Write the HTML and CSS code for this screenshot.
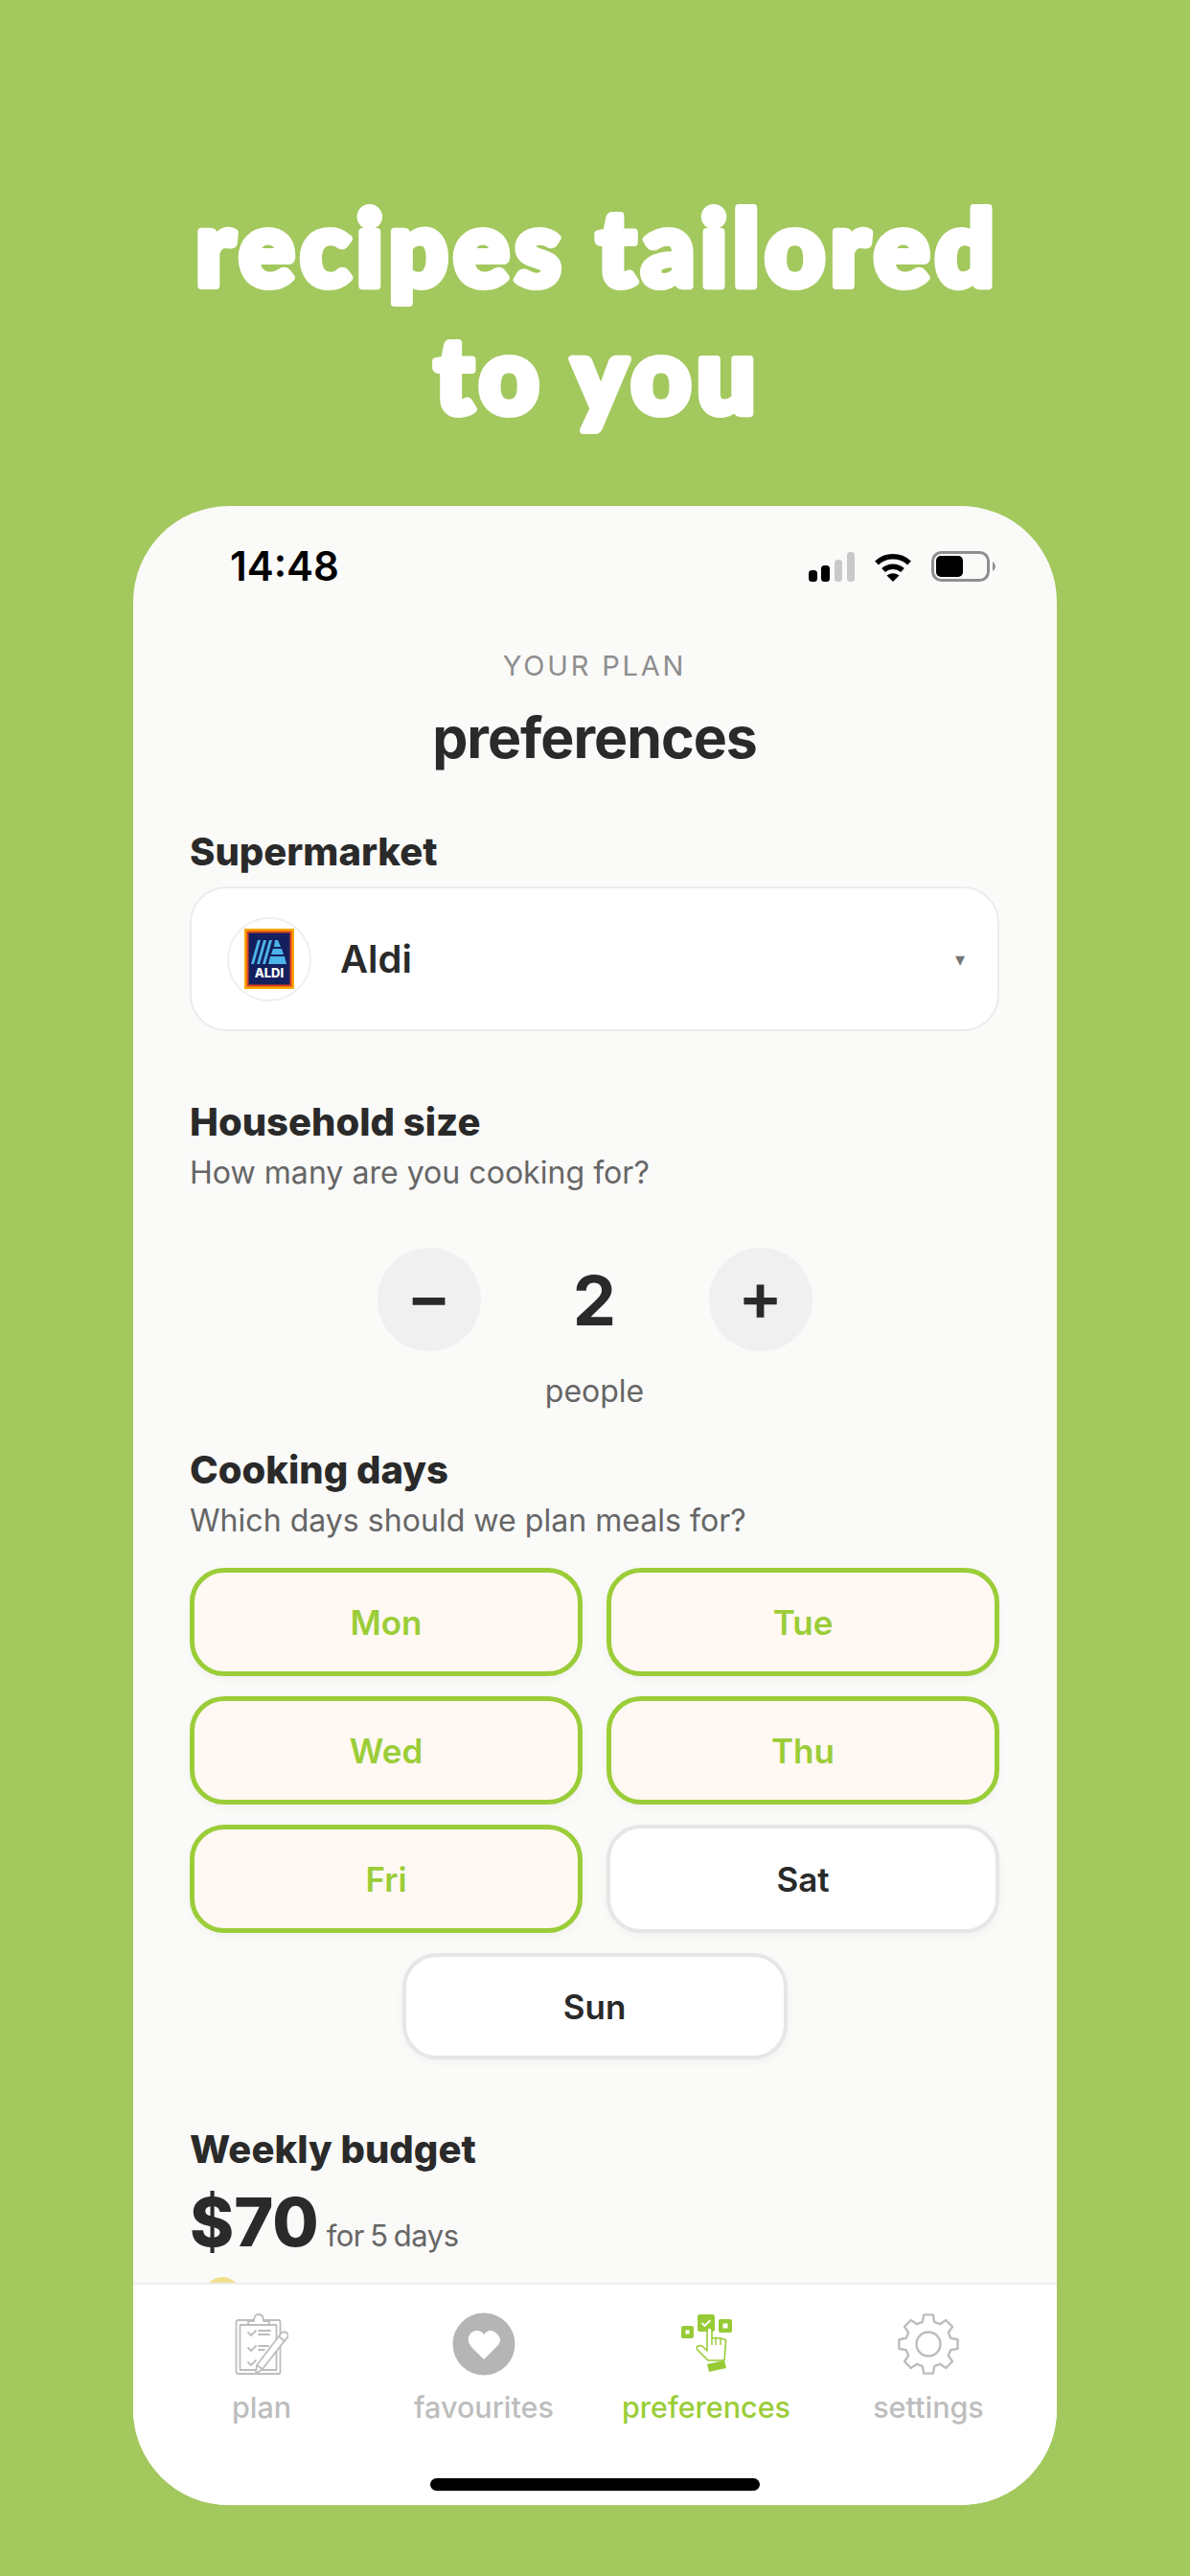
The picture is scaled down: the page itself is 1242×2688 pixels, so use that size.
FILE: index.html
```html
<!DOCTYPE html>
<html lang="en">
<head>
  <meta charset="UTF-8">
  <title>recipes tailored to you</title>
  <link rel="stylesheet" href="styles.css">
</head>
<body>
  <svg class="headline" width="1242" height="336" viewBox="0 0 1242 336">
    <text x="624" y="106">recipes tailored</text>
    <text x="624" y="239">to you</text>
  </svg>

  <div class="phone">
    <div class="status">
      <span class="status-time">14:48</span>
      <div class="status-icons">
        <svg class="signal" width="49" height="31" viewBox="0 0 49 31">
          <rect x="0" y="19" width="9" height="12" rx="3.5" fill="#000"/>
          <rect x="13" y="14" width="9" height="17" rx="3.5" fill="#000"/>
          <rect x="27" y="8" width="8" height="23" rx="3.5" fill="#c9c9c9"/>
          <rect x="40" y="0" width="8" height="31" rx="3.5" fill="#c9c9c9"/>
        </svg>
        <svg class="wifi" width="40" height="31" viewBox="0 0 40 31">
          <path d="M3 11.500A25 25 0 0 1 37 11.500" fill="none" stroke="#000" stroke-width="5.500"/>
          <path d="M10 19A15 15 0 0 1 30 19" fill="none" stroke="#000" stroke-width="5.500"/>
          <path d="M13.500 24.500Q20 20 26.500 24.500L20 31Z" fill="#000"/>
        </svg>
        <svg class="battery" width="68" height="32" viewBox="0 0 68 32">
          <rect x="1.500" y="1.500" width="58" height="29" rx="9" fill="none" stroke="#8f8f8f" stroke-width="3"/>
          <rect x="5" y="5" width="28" height="22" rx="5" fill="#000"/>
          <path d="M64 11Q67 13 67 16T64 21Z" fill="#8f8f8f"/>
        </svg>
      </div>
    </div>

    <div class="content">
      <p class="eyebrow">YOUR PLAN</p>
      <h2 class="page-title">preferences</h2>

      <h3 class="label label-super">Supermarket</h3>
      <div class="select">
        <div class="store-logo">
          <svg width="52" height="63" viewBox="0 0 52 63">
            <rect width="52" height="63" fill="#f7a600"/>
            <rect x="2.500" y="2.500" width="47" height="58" fill="#e2401c"/>
            <rect x="4.500" y="4.500" width="43" height="54" fill="#14205e"/>
            <g fill="#4db4ea">
              <path d="M14 12h3l-7 25H7z"/>
              <path d="M20 12h3l-7 25h-3z"/>
              <path d="M26 12h3l-7 25h-3z"/>
              <path d="M32 12h3l3 7h-7z"/>
              <path d="M30 21h9l2 6H28z"/>
              <path d="M27 29h15l2 8H25z"/>
            </g>
            <text class="aldi-text" x="26" y="51" text-anchor="middle">ALDI</text>
          </svg>
        </div>
        <span class="select-name">Aldi</span>
        <span class="select-caret">▾</span>
      </div>

      <h3 class="label label-household">Household size</h3>
      <p class="hint">How many are you cooking for?</p>
      <div class="stepper">
        <button class="step-btn">−</button>
        <span class="step-value">2</span>
        <button class="step-btn">+</button>
      </div>
      <p class="step-unit">people</p>

      <h3 class="label label-days">Cooking days</h3>
      <p class="hint">Which days should we plan meals for?</p>
      <div class="days">
        <div class="day on">Mon</div>
        <div class="day on">Tue</div>
        <div class="day on">Wed</div>
        <div class="day on">Thu</div>
        <div class="day on">Fri</div>
        <div class="day">Sat</div>
        <div class="day day-last">Sun</div>
      </div>

      <h3 class="label label-budget">Weekly budget</h3>
      <div class="price">
        <span class="price-num">$70</span>
        <span class="price-note">for 5 days</span>
      </div>
      <div class="thumb"></div>
    </div>

    <div class="tabbar">
      <div class="tabs">
        <div class="tab">
          <svg width="56" height="66" viewBox="0 0 56 66" fill="none" stroke="#bdbdbd" stroke-width="1.800" stroke-linejoin="round" stroke-linecap="round">
            <rect x="1.500" y="8" width="46" height="56" rx="2"/>
            <rect x="5.500" y="13" width="38" height="47"/>
            <path d="M14 13V9h6Q20 2 25 2T30 9h6v4z" fill="#fff"/>
            <path d="M14 21l3 3 5-5M14 37l3 3 5-5M14 52l3 3 5-5"/>
            <path d="M25 19h12M25 23h11M25 35h10M25 39h6"/>
            <path d="M49 21Q53 19 55 22T54 27L29 59 22 64 23 55z" fill="#fff"/>
            <path d="M23 55l6 4M46 25l6 5"/>
          </svg>
          <span class="tab-label">plan</span>
        </div>
        <div class="tab">
          <svg width="66" height="66" viewBox="0 0 66 66">
            <circle cx="33" cy="33" r="32.500" fill="#b5b5b5"/>
            <path d="M33 49L20 36Q15 30 17.500 24.500T26 19Q30.500 19 33 23 35.500 19 40 19T48.500 24.500 46 36z" fill="#fff"/>
          </svg>
          <span class="tab-label">favourites</span>
        </div>
        <div class="tab active">
          <svg width="56" height="66" viewBox="0 0 56 66" fill="none">
            <rect x="19" y="2" width="18" height="18" rx="2.500" fill="#97cb36"/>
            <path d="M23.500 11l3 3 6-6" stroke="#fff" stroke-width="1.800"/>
            <rect x="2" y="14" width="13" height="13" rx="2" fill="#97cb36"/>
            <rect x="6.500" y="18.500" width="4" height="4" fill="#fff"/>
            <rect x="41" y="7" width="14" height="14" rx="2" fill="#97cb36"/>
            <rect x="45.500" y="11.500" width="5" height="5" fill="#fff"/>
            <path d="M29 19Q29 16 31.500 16T34 19V27L38 26.500 43 27 47 28Q49 28 48.500 31L47 50H30L19 39Q17 36 20 35 23 34 25 36L29 40z" fill="#fff" stroke="#97cb36" stroke-width="1.600" stroke-linejoin="round"/>
            <path d="M38 27v7M43 27v7M34 27v7" stroke="#97cb36" stroke-width="1.400"/>
            <path d="M29 54l18-4 2 8-18 4z" fill="#97cb36"/>
          </svg>
          <span class="tab-label">preferences</span>
        </div>
        <div class="tab">
          <svg width="66" height="66" viewBox="-33 -33 66 66" fill="none" stroke="#bdbdbd" stroke-width="2.400" stroke-linejoin="round">
            <polygon points="-6.200,-23.200 -4.800,-30.600 4.800,-30.600 6.200,-23.200 12,-20.800 18.200,-25 25,-18.200 20.800,-12 23.200,-6.200 30.600,-4.800 30.600,4.800 23.200,6.200 20.800,12 25,18.200 18.200,25 12,20.800 6.200,23.200 4.800,30.600 -4.800,30.600 -6.200,23.200 -12,20.800 -18.200,25 -25,18.200 -20.800,12 -23.200,6.200 -30.600,4.800 -30.600,-4.800 -23.200,-6.200 -20.800,-12 -25,-18.200 -18.200,-25 -12,-20.800"/>
            <circle r="12.500"/>
          </svg>
          <span class="tab-label">settings</span>
        </div>
      </div>
      <div class="home-bar"></div>
    </div>
  </div>
</body>
</html>
```

FILE: styles.css
```css
* {
  margin: 0;
  padding: 0;
  box-sizing: border-box;
}
html, body {
  width: 1242px;
  height: 2688px;
}
body {
  background: #a3c85e;
  font-family: Inter, "Noto Sans", sans-serif;
  color: #2a2a2a;
  overflow: hidden;
  padding-top: 192px;
}
.headline {
  display: block;
}
.headline text {
  font-family: Lato, sans-serif;
  font-weight: 900;
  font-size: 108px;
  letter-spacing: 6px;
  text-anchor: middle;
  fill: #fff;
  stroke: #fff;
  stroke-width: 8px;
  stroke-linejoin: round;
}
.phone {
  width: 964px;
  height: 2086px;
  margin-left: 139px;
  border-radius: 100px;
  background: #fafaf8;
  overflow: hidden;
  display: flex;
  flex-direction: column;
}

/* status bar */
.status {
  height: 120px;
  padding: 40px 63px 0 101px;
  display: flex;
  justify-content: space-between;
}
.status-time {
  font-size: 42px;
  font-weight: 600;
  line-height: 46px;
  color: #000;
}
.status-icons {
  height: 46px;
  display: flex;
  align-items: center;
  gap: 19px;
}
.status-icons .battery {
  margin-left: 1px;
}

/* main scroll area */
.content {
  flex: 1;
  min-height: 0;
  overflow: hidden;
  padding: 30px 60px 0 59px;
  position: relative;
}
.eyebrow {
  font-size: 29px;
  line-height: 34px;
  letter-spacing: 2.800px;
  text-align: center;
  color: #8e8e8e;
}
.page-title {
  margin-top: 23px;
  font-size: 59px;
  font-weight: 700;
  line-height: 70px;
  letter-spacing: -1px;
  text-align: center;
}
.label {
  font-size: 40px;
  font-weight: 800;
  line-height: 48px;
}
.label-super {
  margin-top: 60px;
}
.label-household {
  margin-top: 71px;
}
.label-days {
  margin-top: 38px;
}
.label-budget {
  margin-top: 70px;
}
.hint {
  margin-top: 9px;
  font-size: 32.100px;
  line-height: 40px;
  color: #666;
}

/* supermarket select */
.select {
  height: 151px;
  margin-top: 12px;
  padding: 0 34px 0 37px;
  display: flex;
  align-items: center;
  background: #fff;
  border: 2px solid #ececec;
  border-radius: 38px;
}
.store-logo {
  width: 88px;
  height: 88px;
  border: 2px solid #efefef;
  border-radius: 50%;
  display: flex;
  align-items: center;
  justify-content: center;
}
.aldi-text {
  font-family: Inter, sans-serif;
  font-size: 13px;
  font-weight: 800;
  fill: #fff;
}
.select-name {
  margin-left: 30px;
  font-size: 40px;
  font-weight: 600;
}
.select-caret {
  margin-left: auto;
  font-size: 20px;
  color: #777;
}

/* household stepper */
.stepper {
  margin-top: 58px;
  display: flex;
  justify-content: center;
  align-items: center;
}
.step-btn {
  width: 108px;
  height: 108px;
  padding-bottom: 6px;
  border: 0;
  border-radius: 50%;
  background: #f0f0f0;
  font-family: Inter, sans-serif;
  font-size: 70px;
  font-weight: 600;
  line-height: 1;
  color: #2a2a2a;
}
.step-value {
  width: 238px;
  text-align: center;
  font-size: 72px;
  font-weight: 700;
}
.step-unit {
  margin-top: 22px;
  font-size: 32px;
  line-height: 40px;
  text-align: center;
  color: #666;
}

/* day buttons */
.days {
  margin-top: 29px;
  display: flex;
  flex-wrap: wrap;
  justify-content: center;
  gap: 21px 25px;
}
.day {
  width: 410px;
  height: 113px;
  display: flex;
  align-items: center;
  justify-content: center;
  background: #fff;
  border: 4px solid #e6e6e6;
  border-radius: 36px;
  box-shadow: 0 3px 10px rgba(0, 0, 0, .04);
  font-size: 35px;
  font-weight: 600;
}
.day.on {
  background: #fff8f3;
  border: 5px solid #9bcd38;
  color: #9bcd38;
}
.day-last {
  width: 402px;
  height: 111px;
}

/* budget */
.price {
  margin-top: 12px;
  display: flex;
  align-items: baseline;
  gap: 8px;
  line-height: 80px;
}
.price-num {
  font-size: 70px;
  font-weight: 800;
}
.price-note {
  font-size: 31px;
  letter-spacing: -.5px;
  word-spacing: -2px;
  color: #666;
}
.thumb {
  position: absolute;
  left: 74px;
  top: 1728px;
  width: 38px;
  height: 38px;
  border-radius: 50%;
  background: #eee08f;
}

/* bottom tabs */
.tabbar {
  height: 232px;
  padding: 29px 18px 0;
  background: #fff;
  border-top: 2px solid #eeeeee;
  display: flex;
  flex-direction: column;
  align-items: center;
}
.tabs {
  width: 100%;
  display: grid;
  grid-template-columns: repeat(4, 1fr);
}
.tab {
  display: flex;
  flex-direction: column;
  align-items: center;
  gap: 14px;
}
.tab-label {
  font-size: 30.500px;
  font-weight: 500;
  line-height: 38px;
  color: #bdbdbd;
}
.tab.active .tab-label {
  color: #9bcd38;
}
.home-bar {
  width: 344px;
  height: 13px;
  margin-top: 55px;
  border-radius: 7px;
  background: #000;
}
```
